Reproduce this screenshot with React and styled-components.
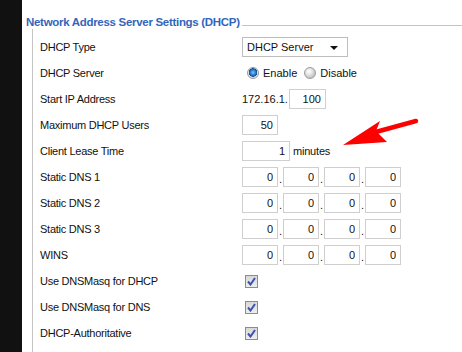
import React from "react";
import styled, { createGlobalStyle } from "styled-components";

const Global = createGlobalStyle`
  html, body {
    margin: 0;
    padding: 0;
    background: #fff;
    overflow: hidden;
  }
  body {
    font-family: "Liberation Sans", Arial, sans-serif;
    font-size: 11px;
    color: #111;
  }
`;

const Page = styled.div`
  position: relative;
  display: flex;
  width: 462px;
  height: 352px;
  overflow: hidden;
`;

const Band = styled.div`
  width: 22px;
  flex: none;
  background: #111;
`;

const Content = styled.div`
  flex: 1;
  padding-top: 15px;
  padding-left: 4px;
`;

const Header = styled.div`
  display: flex;
  align-items: flex-start;
`;

const Title = styled.div`
  font-weight: bold;
  font-size: 11.5px;
  line-height: 14px;
  color: #3366bb;
  letter-spacing: -0.3px;
  white-space: nowrap;
`;

const Rule = styled.div`
  flex: 1;
  margin-top: 10px;
  margin-left: 2px;
  border-top: 1px solid #c4c4c4;
`;

const Body = styled.div`
  margin-left: 6px;
  padding-top: 5px;
  padding-left: 7px;
  border-left: 1px solid #c4c4c4;
  height: 400px;
`;

const Row = styled.div`
  display: grid;
  grid-template-columns: 202px auto;
  align-items: center;
  height: 26px;
`;

const Label = styled.div`
  white-space: nowrap;
  letter-spacing: -0.25px;
`;

const Controls = styled.div`
  display: flex;
  align-items: center;
  white-space: nowrap;
`;

const Select = styled.div`
  position: relative;
  box-sizing: border-box;
  width: 106px;
  height: 20px;
  border: 1px solid #bdbdbd;
  padding-left: 4px;
  display: flex;
  align-items: center;
  background: #fff;
  &::after {
    content: "";
    position: absolute;
    right: 9px;
    top: 8px;
    border-left: 4px solid transparent;
    border-right: 4px solid transparent;
    border-top: 4px solid #111;
  }
`;

const Radio = styled.span`
  box-sizing: border-box;
  width: 12px;
  height: 12px;
  border-radius: 50%;
  border: 1px solid #9a9a9a;
  background: ${(p) =>
    p.checked
      ? "radial-gradient(circle at 50% 45%, #7fc3ff 0, #1e74c9 3px, #0b4a8f 4px, #e8e8e8 4.5px, #d0d0d0 6px)"
      : "radial-gradient(circle at 40% 35%, #ffffff 0, #e6e6e6 3px, #c6c6c6 6px)"};
  margin-left: ${(p) => p.gap || 0}px;
  margin-right: 4px;
`;

const Box = styled.input`
  box-sizing: border-box;
  width: ${(p) => p.w}px;
  height: 20px;
  border: 1px solid #cfcfcf;
  padding: 0 4px 0 0;
  margin: 0;
  text-align: right;
  font-family: "Liberation Sans", Arial, sans-serif;
  font-size: 11px;
  color: #111;
  outline: none;
  background: #fff;
`;

const Dot = styled.span`
  width: 5px;
  text-align: center;
  align-self: flex-end;
  padding-bottom: 2px;
`;

const Unit = styled.span`
  margin-left: 3px;
  letter-spacing: -0.2px;
`;

const Check = styled.span`
  box-sizing: border-box;
  margin-left: 3px;
  width: 13px;
  height: 13px;
  border: 1px solid #8c8c8c;
  background: linear-gradient(#d8d8d8, #eeeeee);
  display: flex;
  align-items: center;
  justify-content: center;
`;

const Arrow = styled.svg`
  position: absolute;
  left: 0;
  top: 0;
  pointer-events: none;
`;

const CheckMark = () => (
  <Check>
    <svg width="9" height="9" viewBox="0 0 9 9">
      <path d="M1 4.5 L3.5 7.5 L8 1" fill="none" stroke="#3b52b0" strokeWidth="2" />
    </svg>
  </Check>
);

const Quad = () => (
  <Controls>
    <Box w={36} defaultValue="0" readOnly />
    <Dot>.</Dot>
    <Box w={36} defaultValue="0" readOnly />
    <Dot>.</Dot>
    <Box w={36} defaultValue="0" readOnly />
    <Dot>.</Dot>
    <Box w={36} defaultValue="0" readOnly />
  </Controls>
);

export default function App() {
  return (
    <>
      <Global />
      <Page>
        <Band />
        <Content>
          <Header>
            <Title>Network Address Server Settings (DHCP)</Title>
            <Rule />
          </Header>
          <Body>
            <Row>
              <Label>DHCP Type</Label>
              <Select>DHCP Server</Select>
            </Row>
            <Row>
              <Label>DHCP Server</Label>
              <Controls>
                <Radio checked gap={5} />
                <span>Enable</span>
                <Radio gap={7} />
                <span>Disable</span>
              </Controls>
            </Row>
            <Row>
              <Label>Start IP Address</Label>
              <Controls>
                <span style={{ marginRight: 1 }}>172.16.1.</span>
                <Box w={37} defaultValue="100" readOnly />
              </Controls>
            </Row>
            <Row>
              <Label>Maximum DHCP Users</Label>
              <Controls>
                <Box w={36} defaultValue="50" readOnly />
              </Controls>
            </Row>
            <Row>
              <Label>Client Lease Time</Label>
              <Controls>
                <Box w={48} defaultValue="1" readOnly />
                <Unit>minutes</Unit>
              </Controls>
            </Row>
            <Row>
              <Label>Static DNS 1</Label>
              <Quad />
            </Row>
            <Row>
              <Label>Static DNS 2</Label>
              <Quad />
            </Row>
            <Row>
              <Label>Static DNS 3</Label>
              <Quad />
            </Row>
            <Row>
              <Label>WINS</Label>
              <Quad />
            </Row>
            <Row>
              <Label>Use DNSMasq for DHCP</Label>
              <CheckMark />
            </Row>
            <Row>
              <Label>Use DNSMasq for DNS</Label>
              <CheckMark />
            </Row>
            <Row>
              <Label>DHCP-Authoritative</Label>
              <CheckMark />
            </Row>
          </Body>
        </Content>
        <Arrow width="462" height="352" viewBox="0 0 462 352">
          <line x1="416" y1="121" x2="372" y2="133" stroke="#ff0000" strokeWidth="4.5" strokeLinecap="round" />
          <path d="M343 145 L380 121 L376 131 L387 142 Z" fill="#ff0000" />
        </Arrow>
      </Page>
    </>
  );
}
